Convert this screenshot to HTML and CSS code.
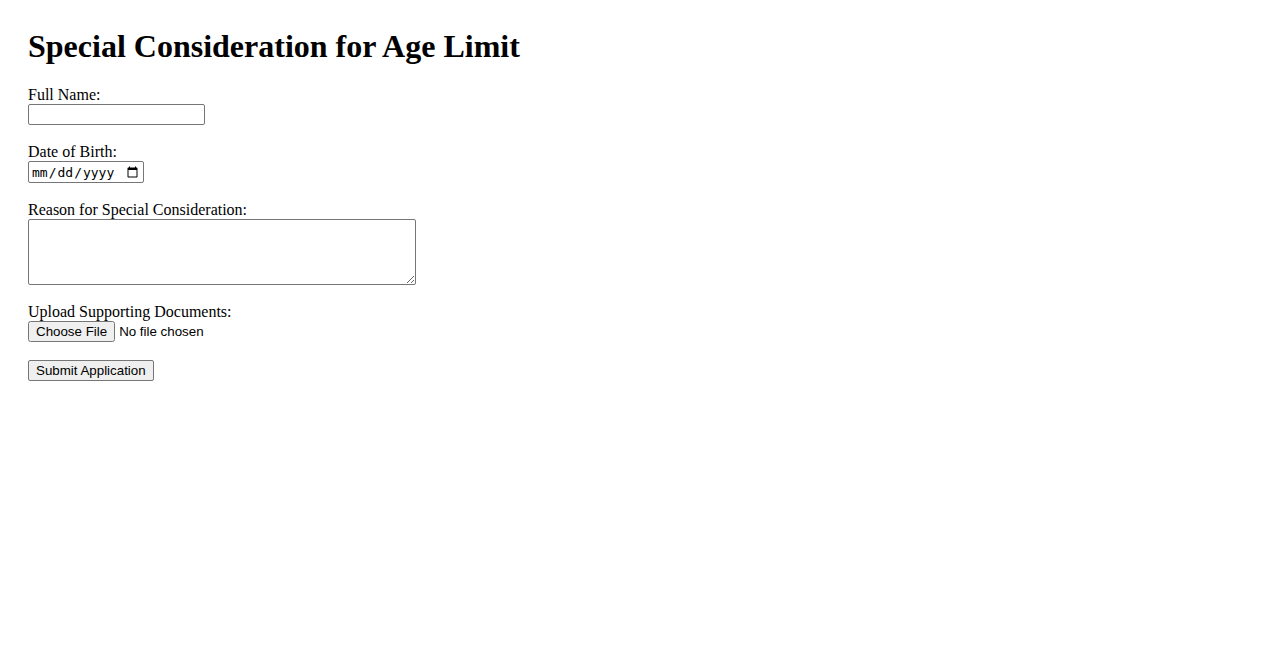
FILE: index.html
```html
<!DOCTYPE html>
<html lang="en">
<head>
<meta charset="utf-8">
<title>Special Consideration for Age Limit</title>
<link rel="stylesheet" href="styles.css">
</head>
<body class="page">
<h1 class="title">Special Consideration for Age Limit</h1>
<form class="form">
<label class="label" for="name">Full Name:</label><br>
<input class="text-input" type="text" id="name" name="name"><br><br>
<label class="label" for="dob">Date of Birth:</label><br>
<input class="date-input" type="date" id="dob" name="dob"><br><br>
<label class="label" for="reason">Reason for Special Consideration:</label><br>
<textarea class="textarea" id="reason" name="reason"></textarea><br><br>
<label class="label" for="docs">Upload Supporting Documents:</label><br>
<input class="file-input" type="file" id="docs" name="docs"><br><br>
<button class="submit" type="submit">Submit Application</button>
</form>
</body>
</html>
```

FILE: styles.css
```css
.page {
  margin: 0;
  padding: 28px 28px;
  font-family: "Liberation Serif", "Times New Roman", serif;
  font-size: 16px;
  color: #000;
  background: #fff;
}
.title {
  margin: 0 0 21.44px;
  font-size: 32px;
  font-weight: bold;
}
.form {
  margin: 0;
}
.text-input,
.file-input,
.submit {
  font-family: "Liberation Sans", Arial, sans-serif;
  font-size: 13.3333px;
}
.text-input {
  width: 177px;
  height: 21px;
  box-sizing: border-box;
  border: 1px solid #767676;
  border-radius: 2px;
  padding: 1px 2px;
  margin: 0;
}
.date-input {
  font-family: "DejaVu Sans Mono", "Liberation Mono", monospace;
  font-size: 13px;
  width: 116px;
  height: 22px;
  box-sizing: border-box;
  border: 1px solid #767676;
  border-radius: 2px;
  padding: 1px 2px;
  margin: 0;
}
.textarea {
  width: 388px;
  height: 66px;
  box-sizing: border-box;
  border: 1px solid #767676;
  border-radius: 2px;
  padding: 2px;
  margin: 0;
  vertical-align: top;
  font-family: "Liberation Mono", monospace;
  font-size: 13.3333px;
}
.file-input {
  margin: 0;
  vertical-align: top;
}
.submit {
  margin: 0;
  height: 21px;
  padding: 1px 7px;
  border: 1px solid #767676;
  border-radius: 2px;
  background: #efefef;
  color: #000;
}
```
